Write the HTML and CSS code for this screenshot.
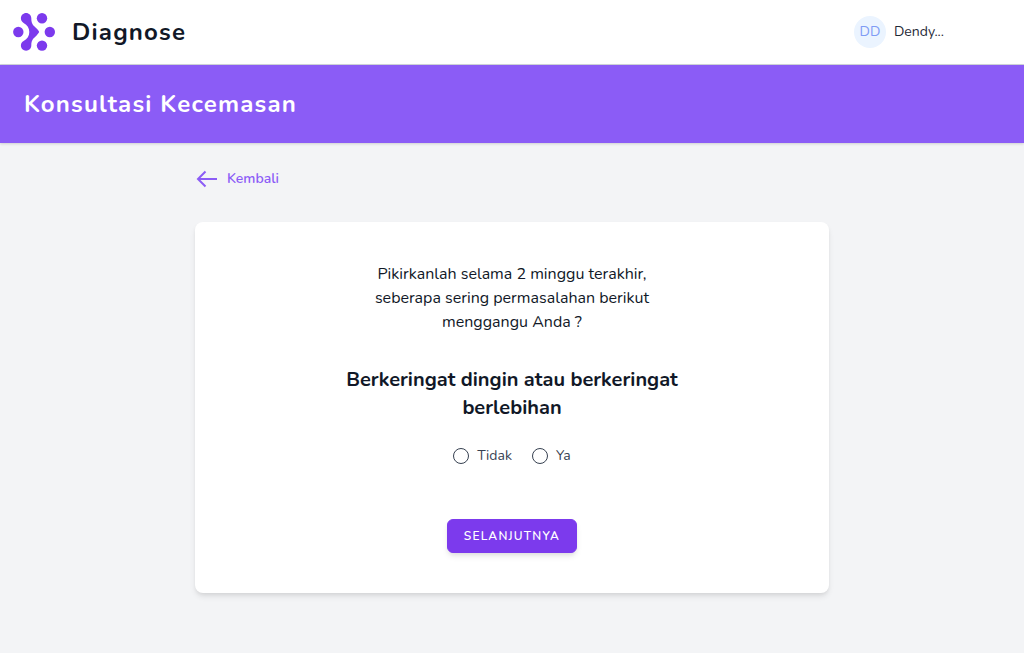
FILE: index.html
```html
<!DOCTYPE html>
<html lang="id">
<head>
<meta charset="utf-8">
<meta name="viewport" content="width=device-width, initial-scale=1">
<title>Diagnose</title>
<link rel="stylesheet" href="styles.css">
</head>
<body>
<nav class="navbar">
  <a class="brand" href="#">
    <svg class="brand-logo" viewBox="12 12 44 40" aria-hidden="true">
      <circle cx="18.3" cy="32" r="5.2"/>
      <circle cx="49.8" cy="32" r="5.2"/>
      <circle cx="42" cy="18.3" r="5.2"/>
      <circle cx="42" cy="45.6" r="5.2"/>
      <path d="M26.1 13.1C29 13.1 31.3 15.4 31.3 18.3C31.3 24.8 33.8 25.6 36.6 28.6C38 30.2 39.1 31.3 39.1 32C39.1 32.7 38 33.8 36.6 35.4C33.8 38.4 31.3 39.2 31.3 45.6C31.3 48.5 29 50.8 26.1 50.8C23.2 50.8 20.9 48.5 20.9 45.6C20.9 43.6 22 42 23.6 41.1C27.4 39 29.3 36 29.3 32C29.3 28 27.4 25 23.6 22.9C22 22 20.9 20.3 20.9 18.3C20.9 15.4 23.2 13.1 26.1 13.1Z"/>
    </svg>
    <span class="brand-name">Diagnose</span>
  </a>
  <button class="account" type="button">
    <span class="avatar">DD</span>
    <span>Dendy...</span>
  </button>
</nav>
<header class="page-header">
  <h1 class="page-title">Konsultasi Kecemasan</h1>
</header>
<main class="content">
  <a class="back-link" href="#">
    <svg class="back-icon" viewBox="0 0 24 24" aria-hidden="true"><path d="M22 12H3M10.500 4.500L3 12L10.500 19.500"/></svg>
    <span>Kembali</span>
  </a>
  <form class="card">
    <p class="intro">Pikirkanlah selama 2 minggu terakhir, seberapa sering permasalahan berikut menggangu Anda ?</p>
    <h2 class="question">Berkeringat dingin atau berkeringat berlebihan</h2>
    <div class="options">
      <label class="option"><input class="radio" type="radio" name="answer" value="tidak">Tidak</label>
      <label class="option"><input class="radio" type="radio" name="answer" value="ya">Ya</label>
    </div>
    <button class="submit" type="button">SELANJUTNYA</button>
  </form>
</main>
</body>
</html>
```

FILE: styles.css
```css
* { box-sizing: border-box; }
body {
  margin: 0;
  min-height: 100vh;
  background: #f3f4f6;
  color: #111827;
  font-family: Nunito, Lato, "Liberation Sans", sans-serif;
  font-size: 16px;
  line-height: 24px;
}
h1, h2, p { margin: 0; }
a { color: inherit; text-decoration: none; }
button { font: inherit; cursor: pointer; }
.navbar {
  display: flex;
  align-items: center;
  justify-content: space-between;
  height: 65px;
  padding: 0 80px 0 12px;
  background: #fff;
  border-bottom: 1px solid #d1d5db;
}
.brand { display: flex; align-items: center; gap: 16px; }
.brand-logo { width: 44px; height: 40px; fill: #7c3aed; }
.brand-name, .page-title {
  font-size: 24px;
  font-weight: 700;
  line-height: 32px;
  letter-spacing: 0.05em;
}
.account {
  display: flex;
  align-items: center;
  gap: 8px;
  padding: 0;
  border: 0;
  background: none;
  color: #1f2937;
  font-size: 14px;
}
.avatar {
  width: 32px;
  height: 32px;
  border-radius: 50%;
  background: #ebf4ff;
  color: #7f9cf5;
  line-height: 32px;
  text-align: center;
}
.page-header {
  padding: 23px 24px;
  background: #8b5cf6;
  color: #fff;
  box-shadow: 0 1px 3px rgba(0, 0, 0, 0.1), 0 1px 2px rgba(0, 0, 0, 0.06);
}
.content {
  display: flex;
  flex-direction: column;
  align-items: flex-start;
  gap: 31px;
  max-width: 682px;
  margin: 0 auto;
  padding: 24px;
}
.back-link {
  display: flex;
  align-items: center;
  gap: 8px;
  color: #8b5cf6;
  font-size: 14px;
  font-weight: 600;
}
.back-icon {
  width: 24px;
  height: 24px;
  fill: none;
  stroke: currentColor;
  stroke-width: 2;
}
.card {
  display: flex;
  flex-direction: column;
  align-items: center;
  width: 100%;
  padding: 40px 24px;
  border-radius: 8px;
  background: #fff;
  text-align: center;
  box-shadow: 0 4px 6px -1px rgba(0, 0, 0, 0.1), 0 2px 4px -1px rgba(0, 0, 0, 0.06);
}
.intro { max-width: 288px; }
.question {
  max-width: 352px;
  margin-top: 32px;
  font-size: 20px;
  font-weight: 700;
  line-height: 28px;
}
.options { display: flex; gap: 20px; margin-top: 22px; }
.option {
  display: flex;
  align-items: center;
  gap: 8px;
  color: #374151;
  font-size: 14px;
}
.radio {
  appearance: none;
  width: 16px;
  height: 16px;
  margin: 0;
  border: 1px solid #374151;
  border-radius: 50%;
  background: #fff;
}
.radio:checked { border: 5px solid #7c3aed; }
.submit {
  margin-top: 51px;
  padding: 8px 16px;
  border: 1px solid #7c3aed;
  border-radius: 6px;
  background: #7c3aed;
  color: #fff;
  font-size: 12px;
  font-weight: 600;
  line-height: 16px;
  letter-spacing: 0.1em;
  box-shadow: 0 4px 6px -1px rgba(0, 0, 0, 0.1), 0 2px 4px -1px rgba(0, 0, 0, 0.06);
}
```
